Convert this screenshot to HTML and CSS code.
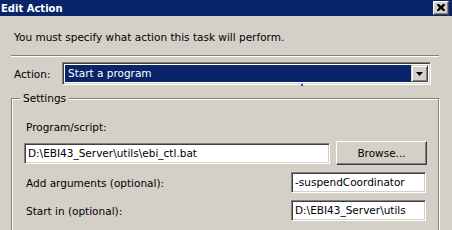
FILE: index.html
```html
<!DOCTYPE html>
<html>
<head>
<meta charset="utf-8">
<link rel="stylesheet" href="styles.css">
</head>
<body>
<div class="window">
  <div class="titlebar">
    <span class="title">Edit Action</span>
    <span class="close"><svg width="8" height="7" viewBox="0 0 8 7"><path d="M0 0h2l2 2 2-2h2v1l-2 2.5 2 2.5v1h-2l-2-2-2 2h-2v-1l2-2.5-2-2.5z" fill="#000"/></svg></span>
  </div>
  <div class="body">
    <p class="intro">You must specify what action this task will perform.</p>
    <div class="sep"></div>
    <div class="action-row">
      <span class="label">Action:</span>
      <div class="combo">
        <div class="combo-value">Start a program</div>
        <div class="combo-btn"><svg width="7" height="4" viewBox="0 0 7 4"><path d="M0 0h7l-3.5 4z" fill="#000"/></svg></div>
        <span class="dot"></span>
      </div>
    </div>
    <div class="group">
      <span class="legend">Settings</span>
      <div class="field-label">Program/script:</div>
      <div class="prog-row">
        <div class="input prog">D:\EBI43_Server\utils\ebi_ctl.bat</div>
        <div class="button">Browse...</div>
      </div>
      <div class="opt-row">
        <span class="opt-label">Add arguments (optional):</span>
        <div class="input opt">-suspendCoordinator</div>
      </div>
      <div class="opt-row">
        <span class="opt-label">Start in (optional):</span>
        <div class="input opt">D:\EBI43_Server\utils</div>
      </div>
    </div>
  </div>
</div>
</body>
</html>
```
FILE: styles.css
```css
* { box-sizing: border-box; }
html, body { margin: 0; padding: 0; }
body {
  width: 452px;
  height: 230px;
  overflow: hidden;
  background: #d4d0c8;
  font-family: "DejaVu Sans", Verdana, sans-serif;
  font-size: 10.5px;
  color: #000;
}
.titlebar {
  height: 16px;
  background: #0a246a;
  display: flex;
  align-items: center;
  justify-content: space-between;
  padding: 0 3px 0 1px;
}
.title {
  color: #fff;
  font-weight: bold;
  font-size: 10px;
  line-height: 13px;
}
.close {
  width: 16px;
  height: 14px;
  background: #d4d0c8;
  border-top: 1px solid #fff;
  border-left: 1px solid #fff;
  border-right: 1px solid #404040;
  border-bottom: 1px solid #404040;
  box-shadow: inset -1px -1px #808080;
  display: flex;
  align-items: center;
  justify-content: center;
  padding-bottom: 1px;
}
.body {
  padding: 0 0 0 11px;
}
.intro {
  margin: 15px 0 0 3px;
  line-height: 13px;
}
.sep {
  margin-top: 11px;
  width: 428px;
  height: 2px;
  border-top: 1px solid #808080;
  border-bottom: 1px solid #fff;
}
.action-row {
  margin-top: 5px;
  display: flex;
  align-items: center;
}
.label {
  margin-left: 3px;
  width: 48px;
}
.combo {
  position: relative;
  width: 369px;
  height: 23px;
  display: flex;
  border-top: 1px solid #808080;
  border-left: 1px solid #808080;
  border-right: 1px solid #fff;
  border-bottom: 1px solid #fff;
  box-shadow: inset 1px 1px #404040, inset -1px -1px #d4d0c8;
  padding: 2px;
  background: #fff;
}
.combo-value {
  flex: 1;
  background: #0a246a;
  color: #fff;
  padding-left: 3px;
  line-height: 17px;
}
.combo-btn {
  width: 17px;
  background: #d4d0c8;
  border-top: 1px solid #d4d0c8;
  border-left: 1px solid #d4d0c8;
  border-right: 1px solid #404040;
  border-bottom: 1px solid #404040;
  box-shadow: inset 1px 1px #fff, inset -1px -1px #808080;
  display: flex;
  align-items: center;
  justify-content: center;
}
.dot {
  position: absolute;
  left: 238px;
  bottom: -2px;
  width: 2px;
  height: 2px;
  background: #3030ff;
}
.group {
  position: relative;
  margin-top: 13px;
  width: 428px;
  height: 140px;
  border: 1px solid #808080;
  box-shadow: inset 1px 1px #fff, 1px 1px #fff;
  padding: 22px 0 0 12px;
}
.legend {
  position: absolute;
  top: -7px;
  left: 8px;
  padding: 0 3px;
  background: #d4d0c8;
  line-height: 13px;
}
.field-label {
  margin-left: 2px;
  line-height: 13px;
}
.prog-row {
  margin-top: 7px;
  display: flex;
  align-items: center;
  gap: 6px;
}
.input {
  background: #fff;
  height: 21px;
  border-top: 1px solid #808080;
  border-left: 1px solid #808080;
  border-right: 1px solid #fff;
  border-bottom: 1px solid #fff;
  box-shadow: inset 1px 1px #404040, inset -1px -1px #d4d0c8;
  padding-left: 3px;
  line-height: 19px;
  white-space: nowrap;
  overflow: hidden;
}
.prog { width: 306px; }
.button {
  width: 91px;
  height: 24px;
  background: #d4d0c8;
  border-top: 1px solid #fff;
  border-left: 1px solid #fff;
  border-right: 1px solid #404040;
  border-bottom: 1px solid #404040;
  box-shadow: inset -1px -1px #808080;
  display: flex;
  align-items: center;
  justify-content: center;
}
.opt-row {
  margin-top: 7px;
  display: flex;
  align-items: center;
  justify-content: space-between;
  width: 402px;
}
.opt-row + .opt-row { margin-top: 7px; }
.opt-label { margin-left: 2px; }
.opt { width: 135px; }
```
